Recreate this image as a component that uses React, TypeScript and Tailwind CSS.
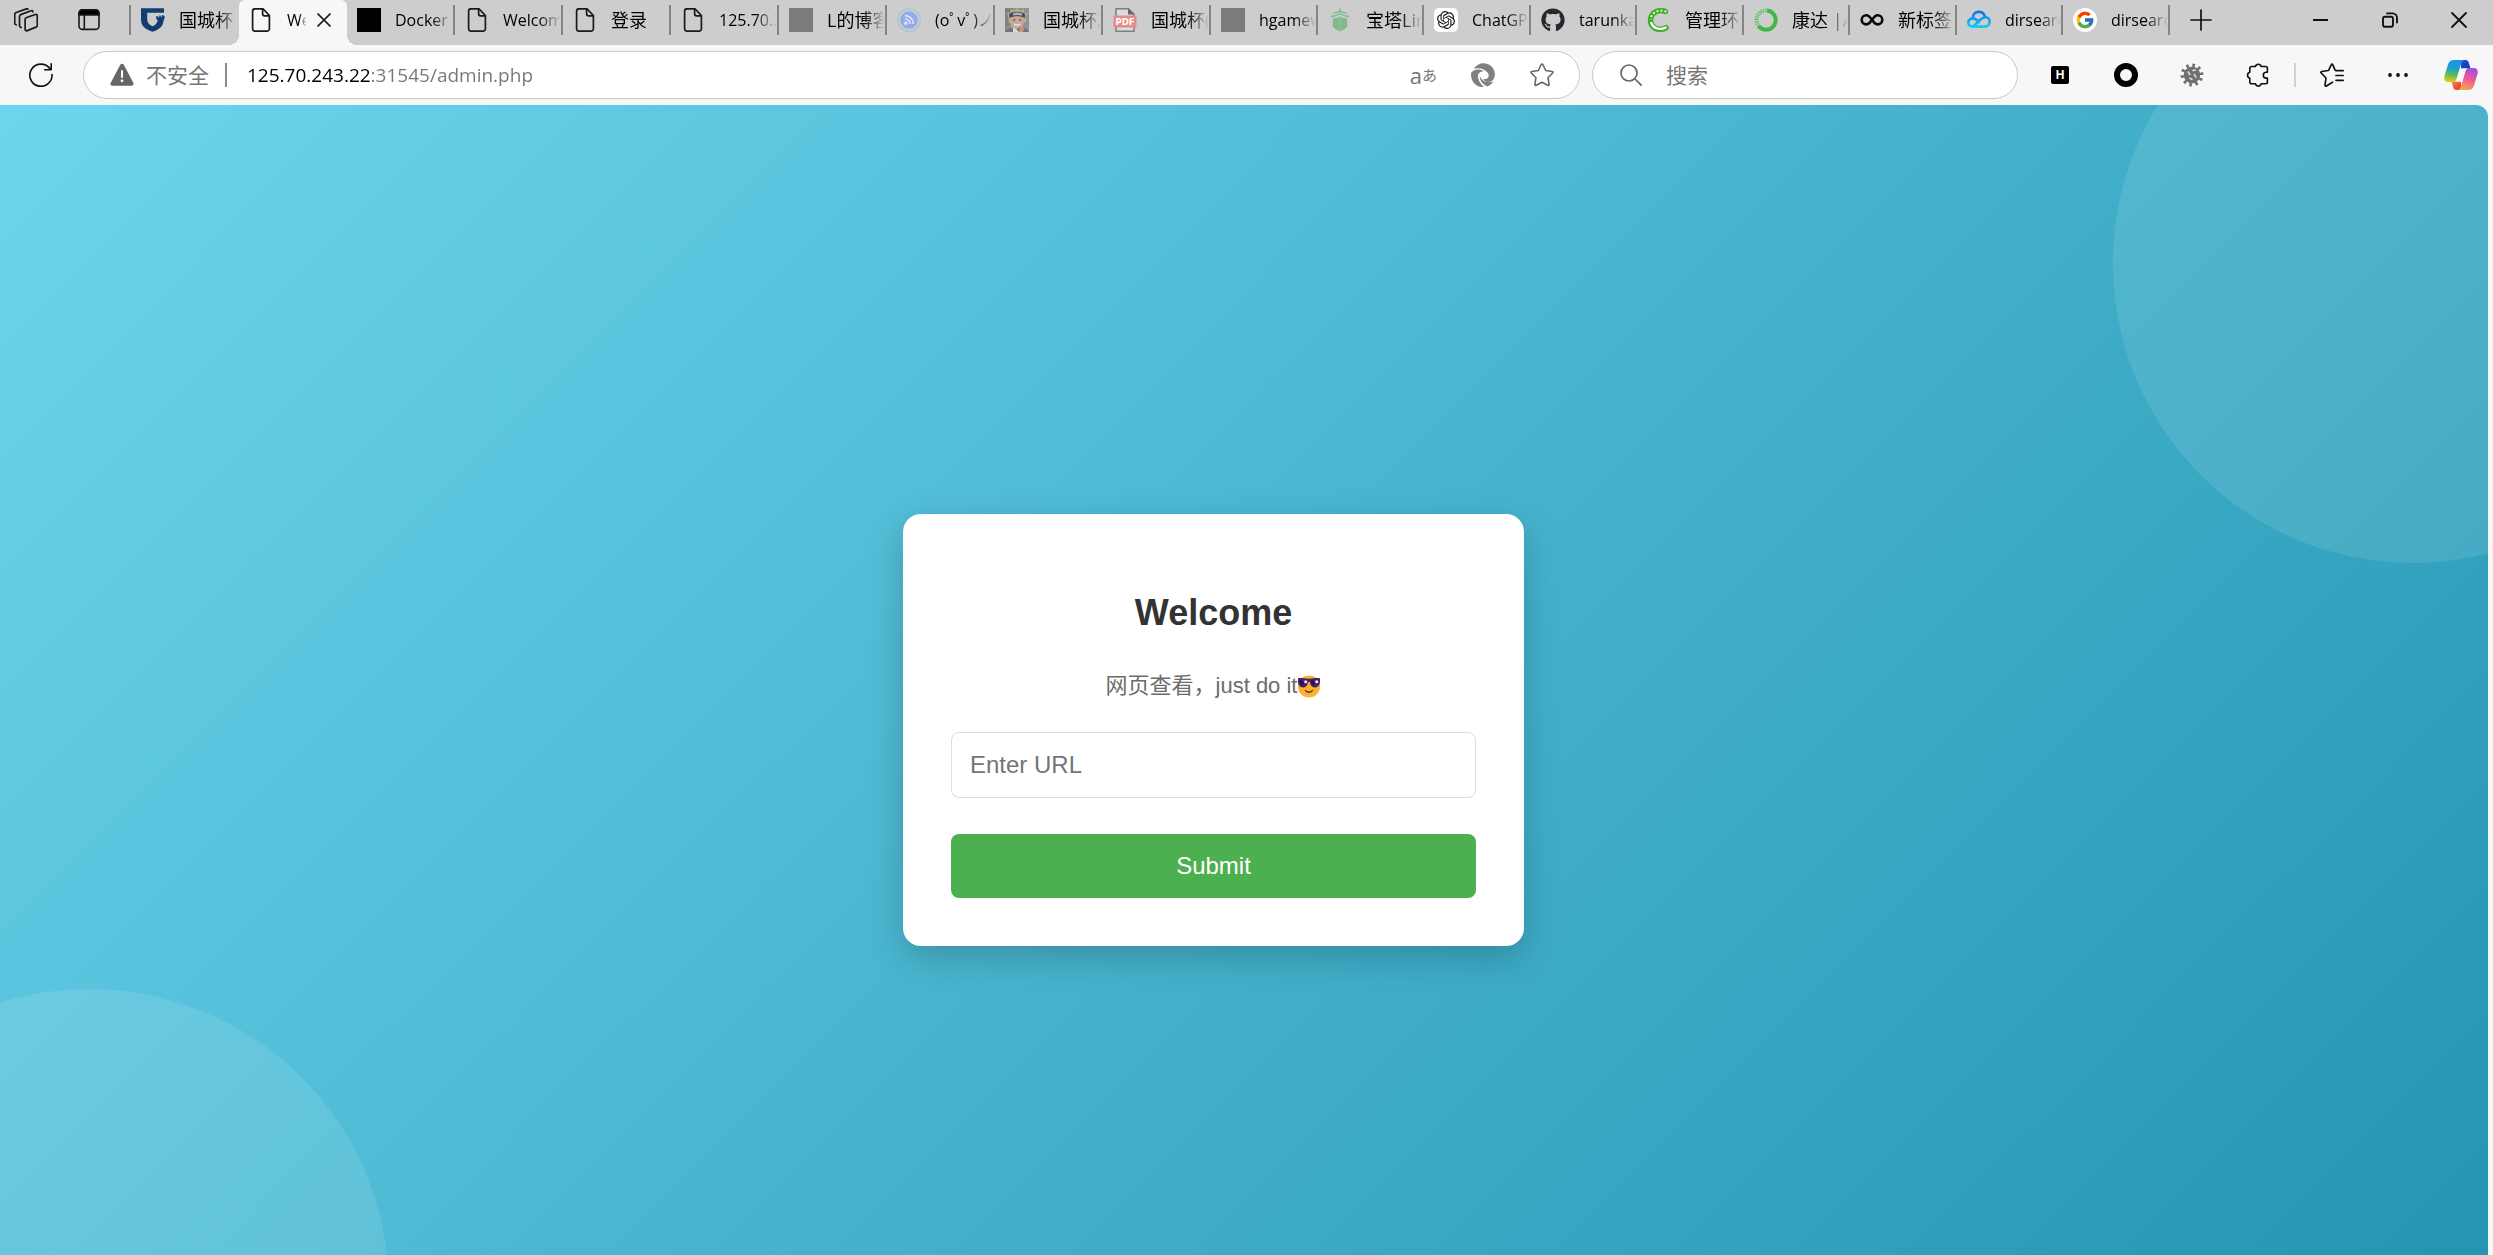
import React from "react";
import type { ReactNode } from "react";
import { FaGithub } from "react-icons/fa";
import { FcGoogle } from "react-icons/fc";
import { SiOpenai } from "react-icons/si";

const S = "h-6 w-6 shrink-0";

const PageIcon = () => (
  <svg className={S} viewBox="0 0 24 24" fill="none" stroke="#1a1a1a" strokeWidth="1.7" strokeLinejoin="round">
    <path d="M6 .8h8L20.4 7.5V20.8a2.4 2.4 0 0 1-2.4 2.4H6a2.4 2.4 0 0 1-2.4-2.4V3.2A2.4 2.4 0 0 1 6 .8Z" />
    <path d="M13.6 1v4.8a2 2 0 0 0 2 2h4.8" />
  </svg>
);

const ShieldIcon = () => (
  <svg className={S} viewBox="0 0 24 24" fill="#123d73">
    <path d="M0 .3H23V4.8H6.2V11c0 3.6 1.7 5.6 5.3 7.3 3.2-1.500 4.900-3.400 5.200-6.400l-1.500-.8V8h1.6v1.2h1.4V7.4h1.6v1.3h1.3V7h1.4v1.2H24l-1.6 5.2c-.6 5-4 8-10.900 10.400C4 21.300 0 17.800 0 11.600Z" />
  </svg>
);

const FeedIcon = () => (
  <svg className={S} viewBox="0 0 24 24" fill="none">
    <circle cx="12" cy="12" r="11.2" stroke="#a3c8d9" strokeWidth="1.3" />
    <circle cx="12" cy="12" r="8.8" fill="#93abe6" />
    <circle cx="8.8" cy="15.2" r="1.7" fill="#dfe4f0" />
    <path d="M8 11a5 5 0 0 1 5 5M8 7.600a8.400 8.400 0 0 1 8.400 8.400" stroke="#dfe4f0" strokeWidth="1.700" />
  </svg>
);

const AvatarIcon = () => (
  <svg className={S} viewBox="0 0 24 24">
    <rect width="24" height="24" fill="#8f938d" />
    <path d="M0 0h8L3 9l2 8-5 3Z" fill="#7c8677" />
    <path d="M3 8 2 4l3 1 1-4 3 2 3-3 3 3 4-2 0 4 4 0-3 5 2 2-3 3H4Z" fill="#b5ae92" />
    <path d="M5 7.500C8 4 16 4 19 7l-1 12-4 3h-4l-4-4Z" fill="#c7a797" />
    <path d="M4 6C8 3 16 3 20 6v4C15 7.500 9 7.500 4.500 10Z" fill="#4a4e54" />
    <path d="M8 5.200c3-1 6-1 9 .2v2.400c-3-1-6-1-9-.2Z" fill="#aab0b6" />
    <path d="M8 12h2.500M14 12h2.500" stroke="#54463f" strokeWidth="1" />
    <path d="M9 16c2 1.500 4 1.500 6 0" stroke="#eee" strokeWidth="1.200" fill="none" />
    <path d="M0 24c1-3 4-4 7-4l4 2 4-3 7 2 2 3Z" fill="#6e7480" />
    <path d="m8 19 4 3 2 2H8Z" fill="#dedad6" />
    <path d="m15 19 4 1-1 4h-4Z" fill="#cf9468" />
  </svg>
);

const PdfIcon = () => (
  <svg className={S} viewBox="0 0 24 24">
    <path d="M3 .8h12.500L21 6.300V23.200H3Z" fill="#dcdcdc" stroke="#7d7d7d" strokeWidth="1.500" />
    <path d="M15 .5v6h6.500Z" fill="#666" />
    <rect x=".5" y="7.500" width="23" height="12" rx="1.500" fill="#e58c8b" />
    <text x="12" y="16.800" textAnchor="middle" fontSize="8.500" fontWeight="700" fill="#fff" fontFamily="'DejaVu Sans', sans-serif">PDF</text>
  </svg>
);

const PagodaIcon = () => (
  <svg className={S} viewBox="0 0 24 24" fill="none" stroke="#7fbe8c" strokeWidth="1.400">
    <path d="M12 .5v4M5 5.300C8 5.300 10 4.300 12 2.800c2 1.500 4 2.500 7 2.500M2.500 8.500C7 8.500 10 7 12 5.500c2 1.500 5 3 9.500 3" />
    <path d="M4.800 10.600C8 10.600 10.500 9.800 12 8.600c1.500 1.200 4 2 7.200 2v7c0 3-4.200 4.600-7.200 5.800-3-1.200-7.200-2.800-7.200-5.800Z" fill="#84b98d" stroke="none" />
    <path d="M12 8.600V23.500" stroke="#9cc7a3" strokeWidth=".8" />
  </svg>
);

const ChatIcon = () => (
  <span className="flex h-6 w-6 shrink-0 items-center justify-center rounded-[5px] bg-white">
    <SiOpenai className="h-[18px] w-[18px] text-[#1f1f1f]" />
  </span>
);

const CIcon = () => (
  <svg className={S} viewBox="0 0 24 24" fill="none" strokeLinecap="round">
    <path d="M18.500 3.500C11 .8 3.500 5 3.500 12.500" stroke="#3fae28" strokeWidth="5.400" />
    <path d="M18.500 3.500C11 .8 3.500 5 3.500 12.500" stroke="#e9f6e5" strokeWidth="2.200" strokeDasharray=".1 3.900" />
    <path d="M3.600 14C5.500 21.300 13 23 19 19.800" stroke="#3fae28" strokeWidth="5.600" />
    <path d="M4.300 15C6.500 20.800 13 22.300 18.700 19.500" stroke="#fff" strokeWidth="2.200" />
  </svg>
);

const RingIcon = () => (
  <svg className={S} viewBox="0 0 24 24" fill="none">
    <path d="M13 2.500A9.600 9.600 0 1 1 4.500 18" stroke="#41b649" strokeWidth="4" />
    <path d="M12.500 2.500A9.600 9.600 0 0 0 4.500 18" stroke="#55bd5b" strokeWidth="3.600" strokeDasharray="1.400 .9" />
    <path d="M12.500 2.500A9.600 9.600 0 0 0 4.500 18" stroke="#d9e8d9" strokeWidth=".8" strokeDasharray="1.500 1.500" />
  </svg>
);

const InfinityIcon = () => (
  <svg className={S} viewBox="0 0 24 24" fill="none" stroke="#0a0a0a" strokeWidth="2.600">
    <path d="M12 11.800C9.800 8.500 8.300 7.200 6.300 7.200a4.600 4.600 0 0 0 0 9.200c2 0 3.500-1.300 5.700-4.600s3.700-4.600 5.700-4.600a4.600 4.600 0 0 1 0 9.200c-2 0-3.500-1.300-5.700-4.600Z" />
  </svg>
);

const CloudIcon = () => (
  <svg className={S} viewBox="0 0 24 24" fill="none" strokeWidth="2.600" strokeLinecap="round" strokeLinejoin="round">
    <defs>
      <linearGradient id="cloudStroke" gradientUnits="userSpaceOnUse" x1="0" y1="3" x2="0" y2="20">
        <stop offset="0" stopColor="#0d6cf2" />
        <stop offset="1" stopColor="#12d3f3" />
      </linearGradient>
    </defs>
    <path d="M5.800 9.300C6.300 2.300 16.500 2 18 8.900M11.800 14.200C9.500 11.700 8.300 10.400 6.200 10.400c-2.800 0-4.900 1.800-4.900 4.200 0 2.300 2 4 4.400 4h11.800c2.900 0 5.200-2.100 5.200-4.800 0-2.600-2-4.600-4.500-4.600-1.800 0-3 .7-4.500 2.200l-7.200 7" stroke="url(#cloudStroke)" />
  </svg>
);

const GIcon = () => (
  <span className="flex h-6 w-6 shrink-0 items-center justify-center rounded-full bg-white">
    <FcGoogle className="h-5 w-5" />
  </span>
);

const Block = ({ tone }: { tone: string }) => <span className={`h-6 w-6 shrink-0 ${tone}`} />;

type Tab = { icon: ReactNode; title: string; cjk?: boolean; active?: boolean; plain?: boolean };

const tabs: Tab[] = [
  { icon: <ShieldIcon />, title: "国城杯", cjk: true, plain: true },
  { icon: <PageIcon />, title: "Welcome", active: true, plain: true },
  { icon: <Block tone="bg-black" />, title: "Docker" },
  { icon: <PageIcon />, title: "Welcome" },
  { icon: <PageIcon />, title: "登录", cjk: true },
  { icon: <PageIcon />, title: "125.70.2" },
  { icon: <Block tone="bg-[#7b7b7b]" />, title: "L的博客", cjk: true },
  { icon: <FeedIcon />, title: "(oﾟvﾟ)ノ" },
  { icon: <AvatarIcon />, title: "国城杯2", cjk: true },
  { icon: <PdfIcon />, title: "国城杯(", cjk: true },
  { icon: <Block tone="bg-[#7b7b7b]" />, title: "hgamew" },
  { icon: <PagodaIcon />, title: "宝塔Lin", cjk: true },
  { icon: <ChatIcon />, title: "ChatGPT" },
  { icon: <FaGithub className="h-6 w-6 shrink-0 text-[#24292f]" />, title: "tarunka" },
  { icon: <CIcon />, title: "管理环境", cjk: true },
  { icon: <RingIcon />, title: "康达 |A", cjk: true },
  { icon: <InfinityIcon />, title: "新标签页", cjk: true },
  { icon: <CloudIcon />, title: "dirsearch" },
  { icon: <GIcon />, title: "dirsearch" },
];

function TabItem({ tab, index }: { tab: Tab; index: number }) {
  const width = index < 10 ? "w-[108px]" : index % 2 === 0 ? "w-[107px]" : "w-[106px]";
  const shape = tab.active
    ? "rounded-t-[6px] bg-[#f7f7f7] before:absolute before:bottom-0 before:-left-[10px] before:h-[10px] before:w-[10px] before:bg-[radial-gradient(circle_at_0_0,transparent_10px,#f7f7f7_10px)] after:absolute after:bottom-0 after:-right-[10px] after:h-[10px] after:w-[10px] after:bg-[radial-gradient(circle_at_100%_0,transparent_10px,#f7f7f7_10px)]"
    : "";
  const fade = tab.active
    ? "[mask-image:linear-gradient(to_left,transparent,#000_8px)]"
    : "[mask-image:linear-gradient(to_left,transparent,#000_22px)]";
  return (
    <div className={`relative h-[45px] min-w-0 ${width} ${shape}`}>
      <div className="flex h-10 items-center">
        <button role="tab" aria-selected={!!tab.active} className="flex h-10 min-w-0 flex-1 items-center gap-[14px] pl-[10px] text-left">
          {tab.icon}
          <span
            className={`min-w-0 flex-1 overflow-hidden whitespace-nowrap leading-7 text-black ${fade} ${tab.cjk ? "text-[18px]" : "text-[16px]"}`}
          >
            {tab.title}
          </span>
        </button>
        {tab.active && (
          <button aria-label="关闭标签页" className="mr-[16px] ml-[10px] flex h-6 w-[14px] items-center justify-center">
            <svg className="h-[14px] w-[14px]" viewBox="0 0 14 14" stroke="#111" strokeWidth="1.700" strokeLinecap="round">
              <path d="m1 1 12 12M13 1 1 13" />
            </svg>
          </button>
        )}
        {!tab.plain && <span className="h-[30px] w-[2px] bg-[#858585]" />}
      </div>
    </div>
  );
}

function TabBar() {
  return (
    <header className="flex h-[45px] bg-[#cdcdcd]">
      <div className="flex h-10 shrink-0 items-center pl-[14px]">
        <button aria-label="工作区" className="flex">
          <svg className={S} viewBox="0 0 24 24" fill="none" stroke="#1a1a1a" strokeWidth="1.700" strokeLinecap="round" strokeLinejoin="round">
            <path d="M12.600 9.500 21.300 6.500c1.200-.4 2 .3 2 1.400v9.300c0 .9-.4 1.500-1.300 1.900l-8.700 3.500c-1.200.5-2.200-.1-2.200-1.300v-9.700c0-1.100.5-1.800 1.500-2.100Z" />
            <path d="M18.800 3.800c0-.9-.8-1.300-1.700-1L7.300 6.400C6 6.900 5.500 7.600 5.500 8.800v8.800c0 1 .6 1.700 1.700 2" />
            <path d="M14 1.300c-.3-.5-1-.6-1.600-.4L2.200 4.500C1 5 .7 5.600.7 6.700v8.200c0 1 .4 1.600 1.500 1.900" />
          </svg>
        </button>
        <button aria-label="标签操作菜单" className="ml-[39px] flex">
          <svg className={S} viewBox="0 0 24 24" fill="none" stroke="#1a1a1a" strokeWidth="1.600">
            <rect x="2" y="1.800" width="20" height="19.600" rx="3.500" />
            <path d="M2 5.300a3.500 3.500 0 0 1 3.500-3.500h13A3.500 3.500 0 0 1 22 5.300V7H2Z" fill="#000" />
            <path d="M7.300 7v14" />
          </svg>
        </button>
        <span className="ml-[28px] h-[30px] w-[2px] bg-[#858585]" />
      </div>
      <div role="tablist" className="flex min-w-0">
        {tabs.map((tab, i) => (
          <TabItem key={i} tab={tab} index={i} />
        ))}
      </div>
      <button aria-label="新建标签页" className="ml-[20px] flex h-10 shrink-0 items-center">
        <svg className="h-[22px] w-[22px]" viewBox="0 0 22 22" stroke="#111" strokeWidth="1.700" strokeLinecap="round">
          <path d="M11 1v20M1 11h20" />
        </svg>
      </button>
      <div className="ml-auto flex h-10 shrink-0 items-center">
        <button aria-label="最小化" className="flex h-10 w-[69px] items-center justify-center">
          <span className="h-[2px] w-[15px] bg-[#111]" />
        </button>
        <button aria-label="还原" className="flex h-10 w-[69px] items-center justify-center">
          <svg className="h-4 w-4" viewBox="0 0 16 16" fill="none" stroke="#111" strokeWidth="1.900" strokeLinecap="round">
            <rect x="1" y="4.800" width="10" height="10" rx="2" />
            <path d="M5 1.400h5.500a4.500 4.500 0 0 1 4.500 4.500v4.600" />
          </svg>
        </button>
        <button aria-label="关闭" className="flex h-10 w-[69px] items-center justify-center">
          <svg className="h-4 w-4" viewBox="0 0 16 16" stroke="#111" strokeWidth="1.800" strokeLinecap="round">
            <path d="m1 1 14 14M15 1 1 15" />
          </svg>
        </button>
      </div>
    </header>
  );
}

function CopilotIcon() {
  return (
    <svg className="h-[30px] w-[34px]" viewBox="0 0 34 30">
      <defs>
        <linearGradient id="cpLeft" x1=".3" y1="0" x2=".15" y2="1">
          <stop offset="0" stopColor="#1b93ea" />
          <stop offset=".35" stopColor="#1a9fd0" />
          <stop offset=".65" stopColor="#5dba5c" />
          <stop offset="1" stopColor="#fbcb05" />
        </linearGradient>
        <linearGradient id="cpRight" x1=".7" y1="0" x2=".4" y2="1">
          <stop offset="0" stopColor="#a14be8" />
          <stop offset=".5" stopColor="#ee5a92" />
          <stop offset="1" stopColor="#fda350" />
        </linearGradient>
        <linearGradient id="cpFoldA" x1="0" y1="0" x2="1" y2="1">
          <stop offset="0" stopColor="#1c4fe0" />
          <stop offset="1" stopColor="#0a3cae" />
        </linearGradient>
        <linearGradient id="cpFoldB" x1="0" y1="0" x2="1" y2="1">
          <stop offset="0" stopColor="#f98b2f" />
          <stop offset="1" stopColor="#e0303c" />
        </linearGradient>
      </defs>
      <path d="M17 0h4.500c1.800 0 2.800 1 3.300 2.800L26.500 8.500H17Z" fill="url(#cpFoldA)" />
      <path d="M17 30h-4.500c-1.800 0-2.800-1-3.300-2.800L7.500 21.500H17Z" fill="url(#cpFoldB)" />
      <path d="M10 0h10.500c-2 .3-2.800 1.500-3.500 4l-4.300 14.500C12 21 10.800 22 8.500 22H4C.5 22-.3 19 .5 16L4 4.500C5 1.500 6.800 0 10 0Z" fill="url(#cpLeft)" />
      <path d="M24 30H13.500c2-.3 2.800-1.500 3.500-4l4.300-14.500C22 9 23.200 8 25.500 8H30c3.500 0 4.300 3 3.500 6L30 25.500C29 28.500 27.200 30 24 30Z" fill="url(#cpRight)" />
      <path d="M18.200 8.500h5.300c-1.300.6-1.900 1.500-2.400 3L18.300 21.500h-7.200c.9-.5 1.400-1.500 1.800-3l2.500-8c.4-1.300 1.300-2 2.800-2Z" fill="#f7f7f7" />
    </svg>
  );
}

function Toolbar() {
  return (
    <div className="flex h-[60px] items-center bg-[#f7f7f7] pr-[15px] pl-[29px]">
      <button aria-label="刷新" className="mr-[30px] shrink-0">
        <svg className={S} viewBox="0 0 24 24" fill="none" stroke="#111" strokeWidth="1.600" strokeLinecap="round" strokeLinejoin="round">
          <path d="M23 11.500A11.100 11.100 0 1 1 21 5.800M22.200.8v5.900h-6.500" />
        </svg>
      </button>
      <div className="flex h-12 min-w-0 flex-1 items-center rounded-full border border-[#c8c8c8] bg-white pr-[25px] pl-[26px]">
        <svg className={S} viewBox="0 0 24 24">
          <path d="M10.300 1.700a2 2 0 0 1 3.500 0l9.600 18.200a2 2 0 0 1-1.700 2.900H2.300a2 2 0 0 1-1.700-2.900Z" fill="#666" />
          <path d="M12 8v6" stroke="#fff" strokeWidth="2" strokeLinecap="round" />
          <circle cx="12" cy="17.800" r="1.400" fill="#fff" />
        </svg>
        <span className="ml-[12px] shrink-0 text-[21px] leading-8 text-[#757575]">不安全</span>
        <span className="ml-[16px] h-6 w-[2px] shrink-0 bg-[#8a8a8a]" />
        <input
          aria-label="地址"
          defaultValue="125.70.243.22:31545/admin.php"
          className="ml-[20px] h-9 min-w-0 flex-1 bg-[linear-gradient(to_right,#000_124px,#757575_124px)] bg-clip-text text-[19px] text-transparent outline-none"
        />
        <button aria-label="翻译" className="flex h-8 items-center text-[#767676]">
          <span className="text-[22px] leading-8">a</span>
          <span className="text-[15px] leading-8">あ</span>
        </button>
        <button aria-label="扩展" className="ml-[34px]">
          <svg className={S} viewBox="0 0 24 24">
            <path d="M2.800 5.800C6.500-.2 14.500-1.600 20 3c5 4.300 5 11.500 1 14.700-3 2.200-7.500 1.300-8.700-1.700 3.300.6 5.700-1.300 5.400-4C17.200 7.800 9.500 3.500 2.800 5.800Z" fill="#808080" />
            <path d="M.2 9.500C3.500 5.800 9 5.500 13 8.200c-4-.2-6.500 2.600-5.900 6.500.5 3.200 2.800 6.300 5.900 9.300C4.500 24.500-1 17.500.2 9.500Z" fill="#808080" />
            <path d="M8.800 13c1.600 5 7.400 7.500 13.400 5.400-1.600 2.500-3.700 4.200-6.200 5-4-2-7.500-5.900-7.200-10.400Z" fill="#808080" />
          </svg>
        </button>
        <button aria-label="收藏" className="ml-[35px]">
          <svg className={S} viewBox="0 0 24 24" fill="none" stroke="#666" strokeWidth="1.600" strokeLinejoin="round">
            <path d="M11.200 1.500a.9.900 0 0 1 1.600 0l2.900 6 6.500 1c.8.100 1 .9.500 1.500L18 14.700l1.100 6.700c.1.800-.6 1.300-1.300.9L12 19.200l-5.800 3.100c-.7.400-1.400-.1-1.300-.9L6 14.700 1.300 10c-.5-.6-.3-1.400.5-1.500l6.500-1Z" />
          </svg>
        </button>
      </div>
      <div className="ml-3 flex h-12 w-[426px] shrink-0 items-center rounded-full border border-[#c8c8c8] bg-white pr-6 pl-[27px]">
        <svg className="h-[22px] w-[22px] shrink-0" viewBox="0 0 22 22" fill="none" stroke="#666" strokeWidth="1.700" strokeLinecap="round">
          <circle cx="9" cy="9" r="8" />
          <path d="m15 15 6.200 6.200" />
        </svg>
        <input aria-label="搜索" placeholder="搜索" className="ml-6 h-9 min-w-0 flex-1 text-[21px] outline-none placeholder:text-[#757575]" />
      </div>
      <div className="ml-[30px] flex shrink-0 items-center gap-[42px]">
        <button aria-label="HackBar" className="flex h-6 w-6 items-center justify-center">
          <span className="flex h-[18px] w-[18px] items-center justify-center rounded-[2px] bg-black font-['Liberation_Sans',sans-serif] text-[12px] leading-none font-bold text-white">H</span>
        </button>
        <button aria-label="代理" className="h-6 w-6 rounded-full border-6 border-black" />
        <button aria-label="调试">
          <svg className={S} viewBox="0 0 24 24">
            <g transform="rotate(18 12 12)" fill="#707070">
              <circle cx="12" cy="12" r="8.300" />
              <circle cx="12" cy="12" r="9.600" fill="none" stroke="#707070" strokeWidth="3.600" strokeDasharray="2.600 3.432" />
            </g>
            <path d="m8.300 9 1.500 2.600M14.300 11.500l1.500 2.500M10 15.300l2 1M13 7.500l2-.4" stroke="#dcdcdc" strokeWidth="1.600" strokeLinecap="round" />
          </svg>
        </button>
        <button aria-label="扩展管理">
          <svg className={S} viewBox="0 0 24 24" fill="none" stroke="#111" strokeWidth="1.600" strokeLinejoin="round">
            <path d="M9.400 3.500a3 3 0 0 1 5.800 0h4.500c1 0 1.700.7 1.700 1.700v4.100h-1.200a2.900 2.900 0 0 0 0 5.800h1.200v4c0 1-.7 1.700-1.700 1.700h-4.500a3 3 0 0 1-5.800 0H5.500c-1 0-1.700-.7-1.700-1.700v-4a3 3 0 0 1 0-5.800V5.200c0-1 .7-1.700 1.700-1.700Z" />
          </svg>
        </button>
      </div>
      <span className="ml-6 h-6 w-[2px] shrink-0 bg-[#d2d2d2]" />
      <div className="ml-[24px] flex shrink-0 items-center gap-[42px]">
        <button aria-label="收藏夹">
          <svg className={S} viewBox="0 0 24 24" fill="none" stroke="#111" strokeWidth="1.700" strokeLinecap="round" strokeLinejoin="round">
            <path d="M15 6.800 12.800 1.800c-.4-.9-1.200-.9-1.600 0L8.500 7.500l-6.800 1c-.9.200-1.100.9-.5 1.500L6 15l-1 7c-.1.900.6 1.300 1.400.9l6.100-3.600M16 7.700h7.200M16 12.500h7.200M16 17.300h7.200" />
          </svg>
        </button>
        <button aria-label="设置及其他">
          <svg className={S} viewBox="0 0 24 24" fill="#111">
            <circle cx="4" cy="12" r="1.900" />
            <circle cx="12" cy="12" r="1.900" />
            <circle cx="20" cy="12" r="1.900" />
          </svg>
        </button>
      </div>
      <button aria-label="Copilot" className="ml-[34px] shrink-0">
        <CopilotIcon />
      </button>
    </div>
  );
}

const CoolFace = () => (
  <svg role="img" aria-label="😎" className="h-6 w-6" viewBox="0 0 24 24">
    <circle cx="12" cy="12.500" r="11" fill="#ffb02e" />
    <path d="M8.500 16.500c1.600 2.300 5.400 2.300 7 0" fill="none" stroke="#402a32" strokeWidth="1.300" strokeLinecap="round" />
    <path d="M1 4.800c0-.5.400-.8.900-.8 4.500 0 7.500.7 10.100.7S17.600 4 22.100 4c.5 0 .9.300.9.800v2.800c0 3.600-2 5.900-5 5.900-3.200 0-4.600-2.500-5.200-5.500h-1.600C10.600 11 9.200 13.500 6 13.500c-3 0-5-2.300-5-5.900Z" fill="#46246b" />
    <circle cx="8.700" cy="7.800" r="1.500" fill="#f3eef8" />
    <circle cx="19.700" cy="7.800" r="1.500" fill="#f3eef8" />
    <path d="m3 6.500 3 4M14.500 6.500l3 4" stroke="#2c1050" strokeWidth="3" />
  </svg>
);

export default function App() {
  return (
    <div className="flex min-h-screen flex-col bg-[#f7f7f7] font-['Open_Sans','Noto_Sans_CJK_SC',sans-serif]">
      <TabBar />
      <Toolbar />
      <main className="relative mr-[5px] flex flex-1 items-center justify-center overflow-hidden rounded-tr-[12px] bg-[linear-gradient(135deg,#6dd5ed,#2193b0_103%)] pt-[99px] pr-[61px] font-['Liberation_Sans','Noto_Sans_CJK_SC',sans-serif]">
        <div className="absolute -top-[142px] -right-[225px] h-[600px] w-[600px] rounded-full bg-white/10" />
        <div className="absolute -bottom-[334px] -left-[211px] h-[600px] w-[600px] rounded-full bg-white/10" />
        <form
          onSubmit={(e) => e.preventDefault()}
          className="relative flex w-[621px] flex-col rounded-[18px] bg-white px-12 pt-[78px] pb-12 text-center shadow-[0_12px_36px_rgba(0,0,0,0.2)]"
        >
          <h1 className="text-[36px] leading-[42px] font-bold text-[#333]">Welcome</h1>
          <p className="mt-9 flex items-center justify-center text-[22px] leading-8 text-[#6c6c6c]">
            网页查看，just do it
            <CoolFace />
          </p>
          <input
            type="text"
            aria-label="URL"
            placeholder="Enter URL"
            className="mt-[30px] h-[66px] w-full rounded-[8px] border border-[#ddd] px-[18px] text-[24px] outline-none placeholder:text-[#757575]"
          />
          <button type="submit" className="mt-9 h-16 w-full rounded-[8px] bg-[#4caf50] text-[24px] text-white">
            Submit
          </button>
        </form>
      </main>
    </div>
  );
}
